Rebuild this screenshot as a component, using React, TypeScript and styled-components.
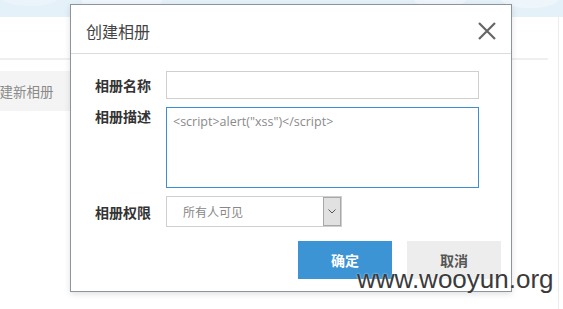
import React from "react";
import styled, { createGlobalStyle } from "styled-components";

const GlobalStyle = createGlobalStyle`
  html, body {
    margin: 0;
    padding: 0;
    background: #fff;
    overflow: hidden;
  }
  body {
    font-family: "Liberation Sans", "Noto Sans CJK SC", sans-serif;
  }
  * {
    box-sizing: border-box;
  }
`;

const Page = styled.div`
  position: relative;
  width: 563px;
  height: 309px;
  overflow: hidden;
`;

const TopBand = styled.div`
  height: 17px;
  background: #e5f1f9;
  position: relative;
  overflow: hidden;

  svg {
    display: block;
  }
`;

const Body = styled.div`
  display: flex;
  height: 292px;
`;

const Main = styled.div`
  flex: 1;
  margin-right: 10px;
`;

const SideRule = styled.div`
  width: 5px;
  border-left: 1px solid #ececec;
`;

const MainHeader = styled.div`
  height: 43px;
  border-bottom: 2px solid #efefef;
`;

const Toolbar = styled.div`
  display: flex;
  margin-top: 11px;
  margin-left: -24px;
`;

const GhostButton = styled.div`
  height: 40px;
  padding: 0 20px 0 10px;
  display: flex;
  align-items: center;
  background: #f4f4f4;
  color: #8a8a8a;
  font-family: "Noto Sans CJK SC", sans-serif;
  font-size: 13.5px;
  width: 116px;
`;

const Dialog = styled.div`
  position: absolute;
  left: 70px;
  top: 4px;
  width: 442px;
  height: 288px;
  background: #fff;
  border: 1px solid #8d949c;
  box-shadow: 0 2px 6px rgba(0, 0, 0, 0.12);
  display: flex;
  flex-direction: column;
`;

const DialogHeader = styled.div`
  height: 49px;
  border-bottom: 1px solid #dcdcdc;
  display: flex;
  align-items: center;
  justify-content: space-between;
  padding: 0 14px 0 15px;
`;

const Title = styled.h2`
  margin: 0;
  font-family: "Noto Sans CJK SC", sans-serif;
  font-weight: 400;
  font-size: 16px;
  color: #444;
  line-height: 1;
  margin-top: 4px;
`;

const CloseButton = styled.button`
  border: none;
  background: none;
  padding: 0;
  width: 20px;
  height: 20px;
  margin-top: 4px;
  display: flex;
  align-items: center;
  justify-content: center;
`;

const Form = styled.div`
  padding: 17px 10px 0 24px;
  display: grid;
  grid-template-columns: 56px 313px;
  column-gap: 15px;
  row-gap: 8px;
`;

const Label = styled.label<{ $top?: boolean }>`
  font-family: "Noto Sans CJK SC", sans-serif;
  font-weight: 700;
  font-size: 14px;
  color: #333;
  display: flex;
  align-items: ${(p) => (p.$top ? "flex-start" : "center")};
  line-height: 18px;
  white-space: nowrap;
`;

const TextInput = styled.div`
  height: 28px;
  border: 1px solid #cfcfcf;
  background: #fff;
`;

const TextArea = styled.div`
  height: 81px;
  border: 1px solid #3c8fd1;
  padding: 6px 6px;
  font-family: "Open Sans", "Liberation Sans", sans-serif;
  font-size: 12.5px;
  color: #8a8a8a;
  line-height: 16px;
`;

const SelectBox = styled.div`
  width: 176px;
  height: 31px;
  border: 1px solid #cfcfcf;
  display: flex;
  align-items: stretch;
`;

const SelectValue = styled.div`
  flex: 1;
  padding-left: 16px;
  display: flex;
  align-items: center;
  font-family: "Noto Sans CJK SC", sans-serif;
  font-size: 12px;
  color: #888;
`;

const SelectArrow = styled.div`
  width: 18px;
  background: #e1e1e1;
  border: 1px solid #a8a8a8;
  display: flex;
  align-items: center;
  justify-content: center;
`;

const Actions = styled.div`
  display: flex;
  justify-content: flex-end;
  gap: 15px;
  padding: 14px 10px 0 0;
`;

const ActionButton = styled.button<{ $primary?: boolean }>`
  width: 94px;
  height: 38px;
  border: none;
  padding: 0;
  font-family: "Noto Sans CJK SC", sans-serif;
  font-weight: 700;
  font-size: 14px;
  background: ${(p) => (p.$primary ? "#3c94d5" : "#ededed")};
  color: ${(p) => (p.$primary ? "#fff" : "#555")};
`;

const Watermark = styled.div`
  position: absolute;
  left: 357px;
  top: 264px;
  font-family: "Liberation Sans", sans-serif;
  font-size: 26px;
  color: #3b3b3b;
  text-shadow: 0 0 2px rgba(255, 255, 255, 0.8);
`;

function Clouds() {
  return (
    <svg width="563" height="17" viewBox="0 0 563 17">
      <ellipse cx="110" cy="2" rx="28" ry="13" fill="#eef6fb" />
      <ellipse cx="140" cy="0" rx="22" ry="10" fill="#eef6fb" />
      <ellipse cx="30" cy="-4" rx="30" ry="10" fill="#eaf4fa" />
      <ellipse cx="440" cy="-2" rx="26" ry="12" fill="#eef6fb" />
      <ellipse cx="530" cy="-3" rx="30" ry="11" fill="#eef6fb" />
    </svg>
  );
}

export default function App() {
  return (
    <Page>
      <GlobalStyle />
      <TopBand>
        <Clouds />
      </TopBand>
      <Body>
        <Main>
          <MainHeader />
          <Toolbar>
            <GhostButton>创建新相册</GhostButton>
          </Toolbar>
        </Main>
        <SideRule />
      </Body>

      <Dialog>
        <DialogHeader>
          <Title>创建相册</Title>
          <CloseButton aria-label="close">
            <svg width="18" height="18" viewBox="0 0 18 18">
              <path d="M1 1 L17 17 M17 1 L1 17" stroke="#666" strokeWidth="2.2" />
            </svg>
          </CloseButton>
        </DialogHeader>
        <Form>
          <Label>相册名称</Label>
          <TextInput />
          <Label $top>相册描述</Label>
          <TextArea>{'<script>alert("xss")</script>'}</TextArea>
          <Label>相册权限</Label>
          <SelectBox>
            <SelectValue>所有人可见</SelectValue>
            <SelectArrow>
              <svg width="8" height="5" viewBox="0 0 8 5">
                <path d="M0.5 0.5 L4 4 L7.5 0.5" stroke="#555" strokeWidth="1" fill="none" />
              </svg>
            </SelectArrow>
          </SelectBox>
        </Form>
        <Actions>
          <ActionButton $primary>确定</ActionButton>
          <ActionButton>取消</ActionButton>
        </Actions>
      </Dialog>

      <Watermark>www.wooyun.org</Watermark>
    </Page>
  );
}
